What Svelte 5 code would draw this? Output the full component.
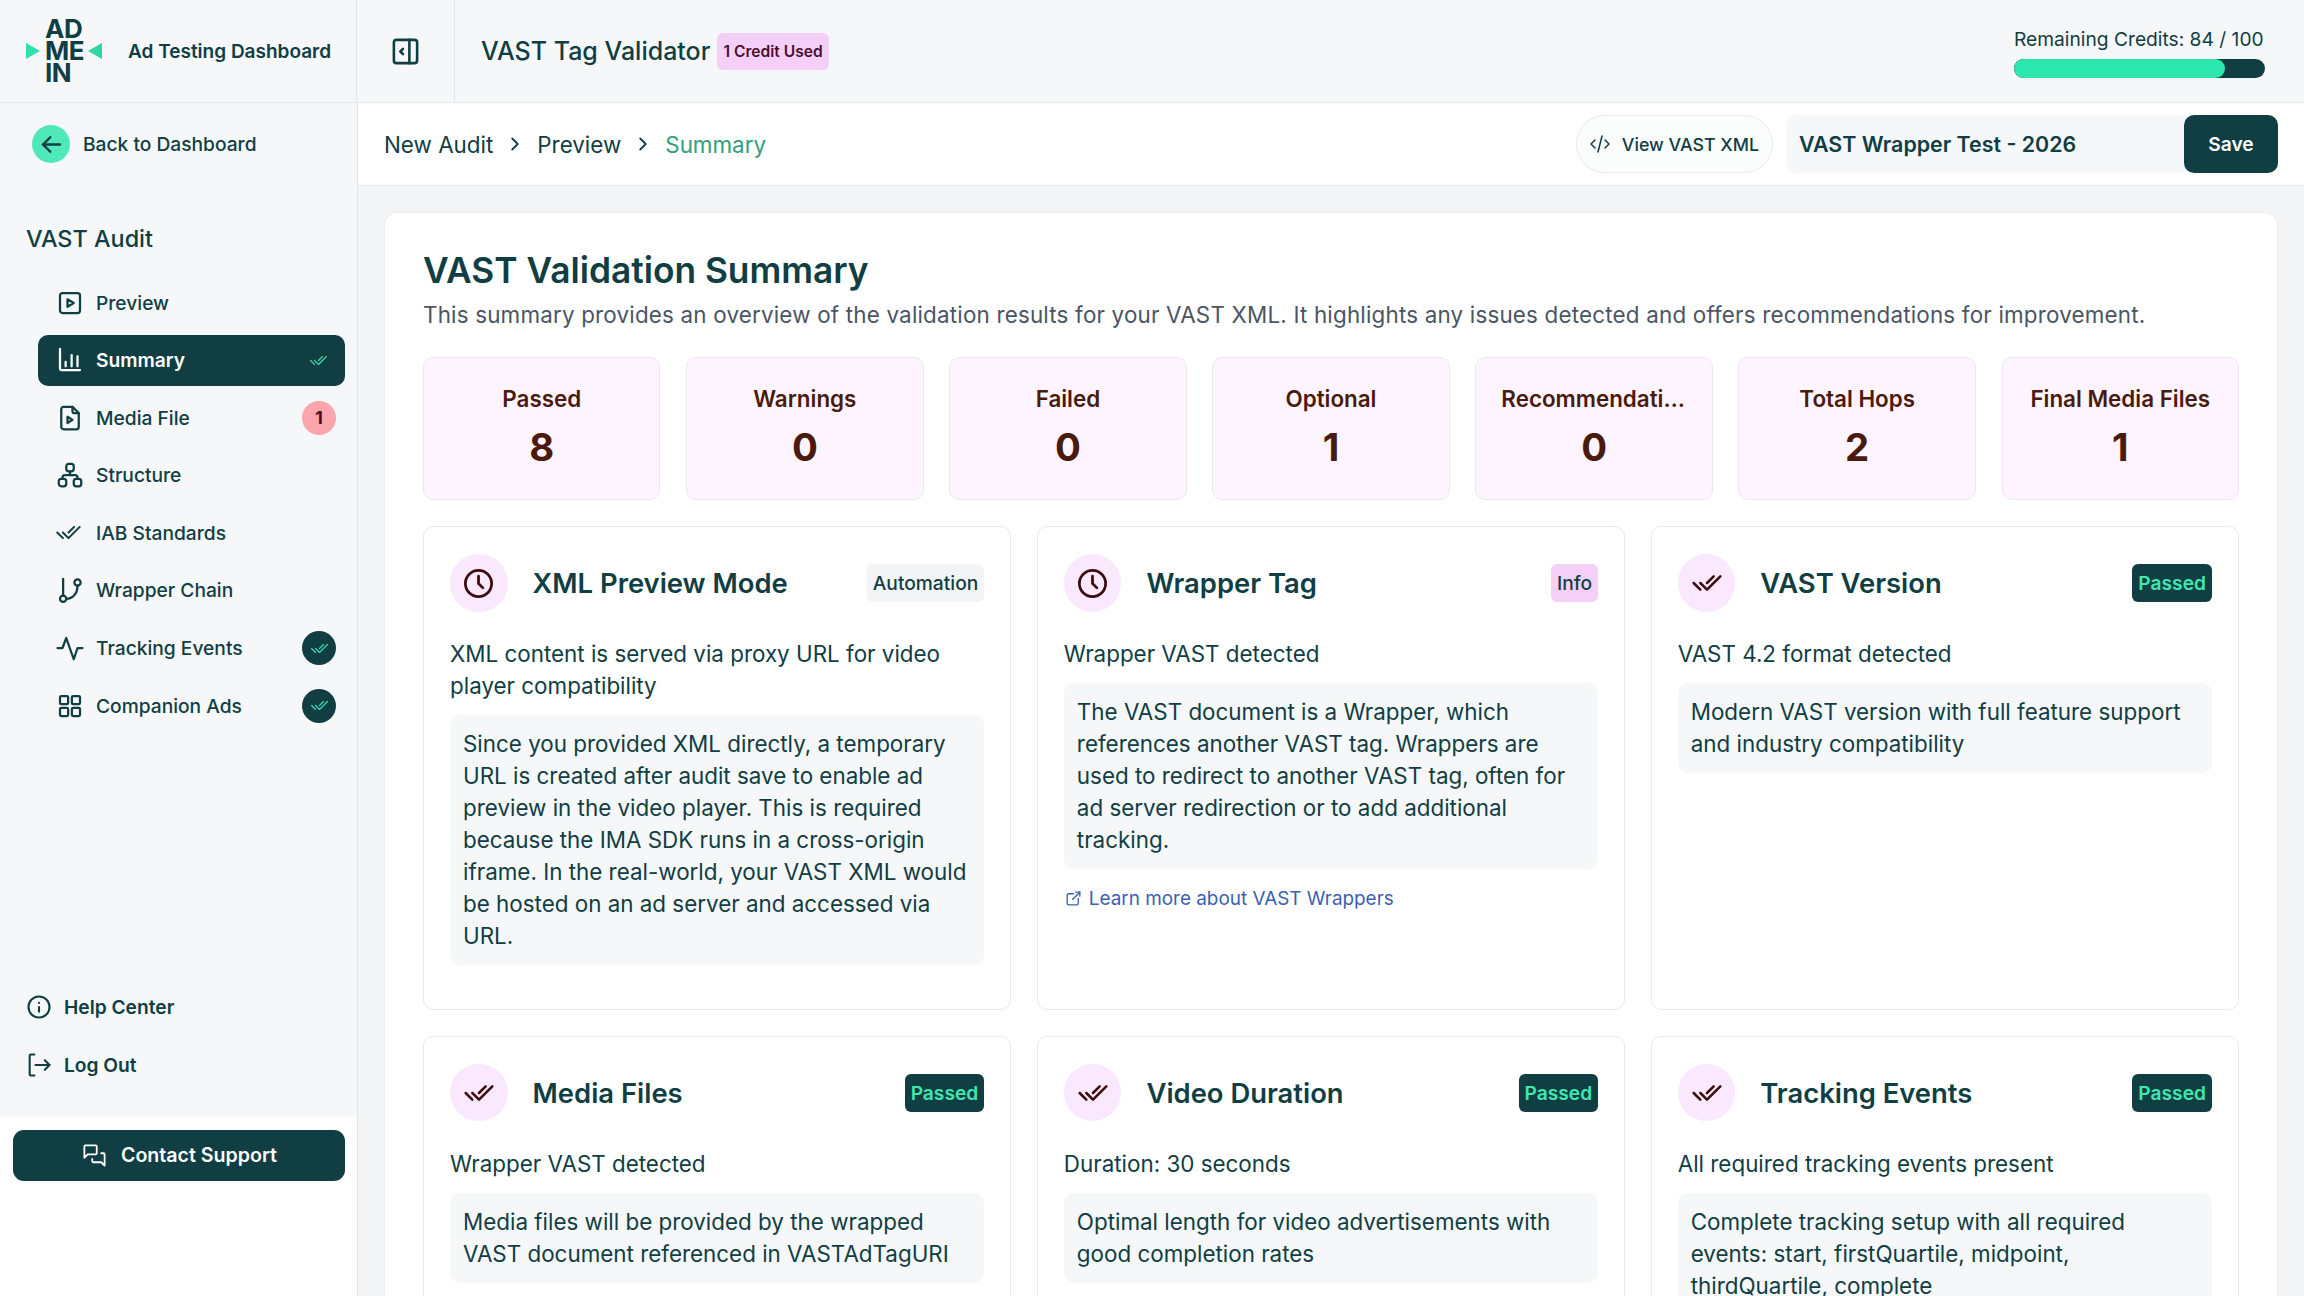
<script lang="ts">
  const nav = [
    { label: 'Preview', icon: 'preview' },
    { label: 'Summary', icon: 'chart', active: true },
    { label: 'Media File', icon: 'file', count: '1' },
    { label: 'Structure', icon: 'sitemap' },
    { label: 'IAB Standards', icon: 'checks' },
    { label: 'Wrapper Chain', icon: 'branch' },
    { label: 'Tracking Events', icon: 'activity', done: true },
    { label: 'Companion Ads', icon: 'grid', done: true },
  ];

  const stats = [
    ['Passed', '8'],
    ['Warnings', '0'],
    ['Failed', '0'],
    ['Optional', '1'],
    ['Recommendations', '0'],
    ['Total Hops', '2'],
    ['Final Media Files', '1'],
  ];

  const checks = [
    {
      title: 'XML Preview Mode',
      badge: 'Automation',
      kind: 'auto',
      icon: 'clock',
      sub: 'XML content is served via proxy URL for video player compatibility',
      body: 'Since you provided XML directly, a temporary URL is created after audit save to enable ad preview in the video player. This is required because the IMA SDK runs in a cross-origin iframe. In the real-world, your VAST XML would be hosted on an ad server and accessed via URL.',
    },
    {
      title: 'Wrapper Tag',
      badge: 'Info',
      kind: 'info',
      icon: 'clock',
      sub: 'Wrapper VAST detected',
      body: 'The VAST document is a Wrapper, which references another VAST tag. Wrappers are used to redirect to another VAST tag, often for ad server redirection or to add additional tracking.',
      link: 'Learn more about VAST Wrappers',
    },
    {
      title: 'VAST Version',
      badge: 'Passed',
      kind: 'pass',
      icon: 'checks',
      sub: 'VAST 4.2 format detected',
      body: 'Modern VAST version with full feature support and industry compatibility',
    },
    {
      title: 'Media Files',
      badge: 'Passed',
      kind: 'pass',
      icon: 'checks',
      sub: 'Wrapper VAST detected',
      body: 'Media files will be provided by the wrapped VAST document referenced in VASTAdTagURI',
    },
    {
      title: 'Video Duration',
      badge: 'Passed',
      kind: 'pass',
      icon: 'checks',
      sub: 'Duration: 30 seconds',
      body: 'Optimal length for video advertisements with good completion rates',
    },
    {
      title: 'Tracking Events',
      badge: 'Passed',
      kind: 'pass',
      icon: 'checks',
      sub: 'All required tracking events present',
      body: 'Complete tracking setup with all required events: start, firstQuartile, midpoint, thirdQuartile, complete',
    },
  ];
</script>

{#snippet icon(name: string, size = 24, width = 2)}
  <svg viewBox="0 0 24 24" width={size} height={size} fill="none" stroke="currentColor" stroke-width={width} stroke-linecap="round" stroke-linejoin="round">
    {#if name === 'preview'}
      <rect x="4" y="4" width="16" height="16" rx="2" /><path d="M10 9l5 3l-5 3z" />
    {:else if name === 'chart'}
      <path d="M4 3v16a1 1 0 0 0 1 1h15" /><path d="M8.500 17v-3.500" /><path d="M13.300 17v-9" /><path d="M18 17v-8" />
    {:else if name === 'file'}
      <path d="M14 3v4a1 1 0 0 0 1 1h4" /><path d="M17 21h-10a2 2 0 0 1 -2 -2v-14a2 2 0 0 1 2 -2h7l5 5v11a2 2 0 0 1 -2 2z" /><path d="M10 11l4 2.500l-4 2.500z" />
    {:else if name === 'sitemap'}
      <rect x="3" y="15" width="6" height="6" rx="2" /><rect x="15" y="15" width="6" height="6" rx="2" /><rect x="9" y="3" width="6" height="6" rx="2" /><path d="M6 15v-1a2 2 0 0 1 2 -2h8a2 2 0 0 1 2 2v1" /><path d="M12 9v3" />
    {:else if name === 'checks'}
      <path d="M7 12l5 5l10 -10" /><path d="M2 12l5 5m5 -5l5 -5" />
    {:else if name === 'branch'}
      <circle cx="6.500" cy="19" r="2.500" /><circle cx="18" cy="6" r="2.500" /><path d="M6.500 16.500v-13.500" /><path d="M9 19c5 0 9 -4 9 -10.500" />
    {:else if name === 'activity'}
      <path d="M2 12h4l3 -8l6 17l3 -9h4" />
    {:else if name === 'grid'}
      <rect x="4" y="4" width="6.500" height="6.500" rx="1" /><rect x="13.500" y="4" width="6.500" height="6.500" rx="1" /><rect x="4" y="13.500" width="6.500" height="6.500" rx="1" /><rect x="13.500" y="13.500" width="6.500" height="6.500" rx="1" />
    {:else if name === 'clock'}
      <circle cx="12" cy="12" r="9" /><path d="M12 7v5l3 3" />
    {:else if name === 'arrow'}
      <path d="M5 12h14" /><path d="M5 12l6 6" /><path d="M5 12l6 -6" />
    {:else if name === 'info'}
      <circle cx="12" cy="12" r="9" /><path d="M12 8.500h.01" /><path d="M12 12v4" />
    {:else if name === 'logout'}
      <path d="M8 3h-3a1 1 0 0 0 -1 1v16a1 1 0 0 0 1 1h3" /><path d="M9 12h12" /><path d="M17 8l4 4l-4 4" />
    {:else if name === 'messages'}
      <path d="M3 14l3 -3h7a1 1 0 0 0 1 -1v-6a1 1 0 0 0 -1 -1h-9a1 1 0 0 0 -1 1v10" /><path d="M10 15v2a1 1 0 0 0 1 1h7l3 3v-10a1 1 0 0 0 -1 -1h-2" />
    {:else if name === 'toggle'}
      <rect x="3" y="3" width="18" height="18" rx="2" /><path d="M15 3v18" /><path d="M10 10l-2 2l2 2" />
    {:else if name === 'code'}
      <path d="M7 8l-4 4l4 4" /><path d="M17 8l4 4l-4 4" /><path d="M14 4l-4 16" />
    {:else if name === 'link'}
      <path d="M12 6h-6a2 2 0 0 0 -2 2v10a2 2 0 0 0 2 2h10a2 2 0 0 0 2 -2v-6" /><path d="M11 13l9 -9" /><path d="M15 4h5v5" />
    {:else if name === 'chevron'}
      <path d="M9 6l6 6l-6 6" />
    {/if}
  </svg>
{/snippet}

<div class="app">
  <header class="top">
    <div class="brand">
      <div class="logo">
        <span class="tri right"></span>
        <span class="logo-text">AD<br />ME<br />IN</span>
        <span class="tri left"></span>
      </div>
      <span class="brand-name">Ad Testing Dashboard</span>
    </div>
    <div class="toggle">{@render icon('toggle', 31, 2)}</div>
    <div class="page-title">
      <h1>VAST Tag Validator</h1>
      <span class="credit">1 Credit Used</span>
    </div>
    <div class="credits">
      <span>Remaining Credits: 84 / 100</span>
      <div class="bar"><div class="fill" style="width: 84%"></div></div>
    </div>
  </header>

  <div class="body">
    <aside class="side">
      <div class="side-main">
        <div class="back">
          <span class="back-dot">{@render icon('arrow', 29, 2)}</span>
          Back to Dashboard
        </div>
        <div class="side-title">VAST Audit</div>
        <nav class="nav">
          {#each nav as item}
            <div class="nav-item" class:active={item.active}>
              <span class="nav-icon">{@render icon(item.icon, item.icon === 'checks' ? 27 : 30, 1.8)}</span>
              <span class="nav-label">{item.label}</span>
              {#if item.active}
                <span class="tick">{@render icon('checks', 19, 1.5)}</span>
              {:else if item.count}
                <span class="dot red">{item.count}</span>
              {:else if item.done}
                <span class="dot dark">{@render icon('checks', 19, 1.5)}</span>
              {/if}
            </div>
          {/each}
        </nav>
        <div class="side-links">
          <div class="side-link">{@render icon('info', 28, 1.8)} Help Center</div>
          <div class="side-link">{@render icon('logout', 28, 1.8)} Log Out</div>
        </div>
      </div>
      <div class="side-foot">
        <button class="support">{@render icon('messages', 27, 1.6)} Contact Support</button>
      </div>
    </aside>

    <main class="main">
      <div class="crumbs">
        <span>New Audit</span>
        <span class="chev">{@render icon('chevron', 22, 2)}</span>
        <span>Preview</span>
        <span class="chev">{@render icon('chevron', 22, 2)}</span>
        <span class="current">Summary</span>
        <div class="crumb-actions">
          <button class="xml">{@render icon('code', 24, 1.5)} View VAST XML</button>
          <div class="name">VAST Wrapper Test - 2026</div>
          <button class="save">Save</button>
        </div>
      </div>

      <div class="content">
        <section class="sheet">
          <h2>VAST Validation Summary</h2>
          <p class="lead">This summary provides an overview of the validation results for your VAST XML. It highlights any issues detected and offers recommendations for improvement.</p>

          <div class="stats">
            {#each stats as [label, value]}
              <div class="stat">
                <div class="stat-label">{label}</div>
                <div class="stat-value">{value}</div>
              </div>
            {/each}
          </div>

          <div class="checks">
            {#each checks as c}
              <article class="check">
                <div class="check-head">
                  <span class="check-icon">{@render icon(c.icon, c.icon === 'clock' ? 35 : 32, 1.9)}</span>
                  <h3>{c.title}</h3>
                  <span class="badge {c.kind}">{c.badge}</span>
                </div>
                <p class="sub">{c.sub}</p>
                <div class="note">{c.body}</div>
                {#if c.link}
                  <div class="more">{@render icon('link', 19, 1.7)} {c.link}</div>
                {/if}
              </article>
            {/each}
          </div>
        </section>
      </div>
    </main>
  </div>
</div>

<style>
  :global(body) {
    margin: 0;
    background: #fff;
    color: #103e43;
    font-family: Inter, "Noto Sans", sans-serif;
  }
  h1, h2, h3, p { margin: 0; }
  button { font-family: inherit; border: 0; }
  svg { display: block; flex: none; }

  .app {
    display: flex;
    flex-direction: column;
    height: 100vh;
    overflow: hidden;
  }
  .top {
    display: flex;
    align-items: stretch;
    flex: none;
    height: 102px;
    background: #f5f7f9;
    border-bottom: 1px solid #e5e7eb;
    box-sizing: content-box;
  }
  .brand {
    display: flex;
    align-items: center;
    width: 357px;
    padding-left: 26px;
    box-sizing: border-box;
    border-right: 1px solid #e1e4e8;
  }
  .logo { display: flex; align-items: center; gap: 5px; width: 102px; }
  .logo-text {
    font-size: 26px;
    font-weight: 700;
    line-height: 22px;
    width: 38px;
    letter-spacing: -0.5px;
  }
  .tri { width: 0; height: 0; border-top: 8px solid transparent; border-bottom: 8px solid transparent; }
  .tri.right { border-left: 14px solid #2fe0ab; }
  .tri.left { border-right: 14px solid #2fd6a4; }
  .brand-name { font-size: 19px; font-weight: 600; white-space: nowrap; }
  .toggle {
    display: flex;
    align-items: center;
    justify-content: center;
    width: 98px;
    border-right: 1px solid #e1e4e8;
    box-sizing: border-box;
  }
  .page-title { display: flex; align-items: center; gap: 7px; padding-left: 26px; }
  .page-title h1 { font-size: 25px; font-weight: 500; }
  .credit {
    background: #f4d0f8;
    color: #4b0f2e;
    font-size: 15.600px;
    font-weight: 600;
    padding: 8px 6px;
    line-height: 21px;
    border-radius: 6px;
    white-space: nowrap;
  }
  .credits {
    margin-left: auto;
    width: 251px;
    margin-right: 39px;
    display: flex;
    flex-direction: column;
    justify-content: center;
    gap: 8px;
    padding-top: 3px;
    font-size: 19.200px;
    white-space: nowrap;
  }
  .bar { height: 19px; border-radius: 10px; background: #103e43; overflow: hidden; }
  .fill { height: 100%; background: #2de8ae; border-radius: 10px; }

  .body { display: flex; flex: 1; min-height: 0; }
  .side {
    width: 358px;
    flex: none;
    display: flex;
    flex-direction: column;
    box-sizing: border-box;
    border-right: 1px solid #e1e4e8;
  }
  .side-main {
    flex: 1;
    display: flex;
    flex-direction: column;
    background: #f5f7f9;
    min-height: 0;
  }
  .back {
    display: flex;
    align-items: center;
    gap: 13px;
    font-size: 19.200px;
    font-weight: 500;
    margin: 22px 0 0 32px;
  }
  .back-dot {
    display: flex;
    align-items: center;
    justify-content: center;
    width: 38px;
    height: 38px;
    border-radius: 50%;
    background: #4fe8b8;
  }
  .side-title { font-size: 23.400px; font-weight: 500; margin: 60px 0 0 26px; line-height: 32px; }
  .nav {
    display: flex;
    flex-direction: column;
    gap: 6.400px;
    margin: 22px 12px 0 38px;
  }
  .nav-item {
    display: flex;
    align-items: center;
    height: 51.200px;
    border-radius: 10px;
    padding: 0 9px 0 17px;
    font-size: 19.200px;
    font-weight: 500;
  }
  .nav-item.active { background: #103e43; color: #fff; font-weight: 600; }
  .nav-icon { width: 41px; flex: none; }
  .nav-label { flex: 1; white-space: nowrap; }
  .tick { color: #3fdcab; margin-right: 8px; }
  .dot {
    display: flex;
    align-items: center;
    justify-content: center;
    width: 34px;
    height: 34px;
    border-radius: 50%;
    flex: none;
  }
  .dot.red { background: #fca5ad; color: #4c0519; font-size: 17.600px; font-weight: 700; }
  .dot.dark { background: #103e43; color: #3fdcab; }

  .side-links { margin-top: auto; padding: 0 0 37px 25px; display: flex; flex-direction: column; gap: 28px; }
  .side-link {
    display: flex;
    align-items: center;
    gap: 11px;
    font-size: 19.200px;
    font-weight: 600;
    height: 30px;
  }
  .side-foot { flex: none; height: 179px; background: #fff; padding: 13px 12px 0 13px; box-sizing: border-box; }
  .support {
    display: flex;
    align-items: center;
    justify-content: center;
    gap: 13px;
    width: 100%;
    height: 51.200px;
    border-radius: 11px;
    background: #103e43;
    color: #fff;
    font-size: 19.600px;
    font-weight: 600;
    padding-bottom: 2px;
  }

  .main { flex: 1; min-width: 0; display: flex; flex-direction: column; background: #f3f4f6; }
  .crumbs {
    flex: none;
    display: flex;
    align-items: center;
    height: 83px;
    box-sizing: border-box;
    padding: 0 26px;
    background: #fff;
    border-bottom: 1px solid #e5e7eb;
    font-size: 22.400px;
  }
  .chev { margin: 0 11px; }
  .current { color: #2f9f7c; }
  .crumb-actions { margin-left: auto; display: flex; align-items: center; }
  .xml {
    display: flex;
    align-items: center;
    gap: 10px;
    height: 58px;
    padding: 0 13px 0 11px;
    border-radius: 29px;
    background: #fbfcfc;
    border: 1px solid #e8eaed;
    color: #103e43;
    font-size: 17.800px;
    font-weight: 500;
    margin-right: 13px;
  }
  .name {
    display: flex;
    align-items: center;
    width: 398px;
    height: 58px;
    box-sizing: border-box;
    padding-left: 13px;
    background: #f5f7f9;
    border-radius: 10px 0 0 10px;
    font-size: 21.400px;
    font-weight: 600;
  }
  .save {
    height: 58px;
    width: 94px;
    border-radius: 10px;
    background: #103e43;
    color: #fff;
    font-size: 19.200px;
    font-weight: 600;
  }

  .content { flex: 1; min-height: 0; overflow: hidden; padding: 26px 26px 0; }
  .sheet {
    background: #fff;
    border: 1px solid #eceef1;
    border-radius: 13px;
    padding: 36px 38px 26px;
  }
  .sheet h2 { font-size: 35.300px; font-weight: 600; line-height: 44px; }
  .lead { font-size: 22.400px; line-height: 32px; color: #4b5563; margin-top: 6px; white-space: nowrap; letter-spacing: 0.19px; }

  .stats {
    display: grid;
    grid-template-columns: repeat(7, minmax(0, 1fr));
    gap: 25.600px;
    margin-top: 26px;
  }
  .stat {
    height: 143px;
    box-sizing: border-box;
    padding: 25px 25px 0;
    background: #fdf4ff;
    border: 1px solid #efe6f3;
    border-radius: 10px;
    text-align: center;
    color: #4a1a0c;
  }
  .stat-label {
    font-size: 22.400px;
    font-weight: 600;
    line-height: 32px;
    white-space: nowrap;
    overflow: hidden;
    text-overflow: ellipsis;
  }
  .stat-value { font-size: 38.400px; font-weight: 700; line-height: 48px; margin-top: 8px; }

  .checks {
    display: grid;
    grid-template-columns: repeat(3, minmax(0, 1fr));
    gap: 25.600px;
    margin-top: 26px;
  }
  .check {
    border: 1px solid #e8eaed;
    border-radius: 10px;
    padding: 27px 26px 26px;
  }
  .check-head { display: flex; align-items: center; height: 58px; }
  .check-icon {
    display: flex;
    align-items: center;
    justify-content: center;
    width: 57.600px;
    height: 57.600px;
    border-radius: 50%;
    background: #fae8ff;
    color: #3c0d0d;
    flex: none;
  }
  .check-head h3 { font-size: 27.400px; font-weight: 600; margin-left: 25px; flex: 1; white-space: nowrap; }
  .badge {
    font-size: 19.200px;
    font-weight: 500;
    line-height: 38px;
    padding: 0 6px;
    border-radius: 6px;
    margin-bottom: 0;
  }
  .badge.auto { background: #f3f4f6; }
  .badge.info { background: #f4d0f8; }
  .badge.pass { background: #103e43; color: #3fe6b0; font-weight: 600; }
  .sub { font-size: 22.400px; line-height: 32px; margin-top: 26px; }
  .note {
    margin: 13px 0 18px;
    padding: 13px;
    background: #f5f7f9;
    border-radius: 10px;
    font-size: 22.400px;
    line-height: 32px;
  }
  .more {
    display: flex;
    align-items: center;
    gap: 6px;
    color: #3a5fb3;
    font-size: 18.900px;
    margin-top: 2px;
  }
</style>
